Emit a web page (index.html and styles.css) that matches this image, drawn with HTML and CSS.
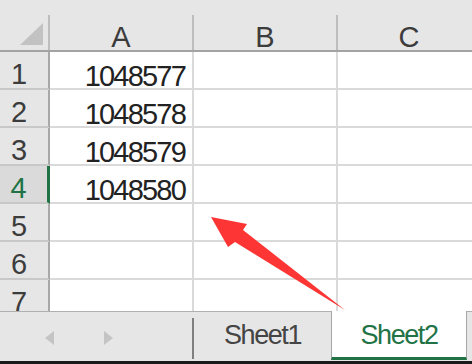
FILE: index.html
```html
<!DOCTYPE html>
<html lang="en">
<head>
  <meta charset="UTF-8">
  <title>Sheet2</title>
  <link rel="stylesheet" href="styles.css">
</head>
<body>
  <div class="sheet">
    <div class="grid">
      <div class="col-heads">
        <div class="corner"><span class="select-all"></span></div>
        <div class="col-head">A</div>
        <div class="col-head">B</div>
        <div class="col-head">C</div>
      </div>
      <div class="row">
        <div class="row-head">1</div>
        <div class="cell">1048577</div>
        <div class="cell"></div>
        <div class="cell"></div>
      </div>
      <div class="row">
        <div class="row-head">2</div>
        <div class="cell">1048578</div>
        <div class="cell"></div>
        <div class="cell"></div>
      </div>
      <div class="row">
        <div class="row-head">3</div>
        <div class="cell">1048579</div>
        <div class="cell"></div>
        <div class="cell"></div>
      </div>
      <div class="row">
        <div class="row-head selected">4</div>
        <div class="cell">1048580</div>
        <div class="cell"></div>
        <div class="cell"></div>
      </div>
      <div class="row">
        <div class="row-head">5</div>
        <div class="cell"></div>
        <div class="cell"></div>
        <div class="cell"></div>
      </div>
      <div class="row">
        <div class="row-head">6</div>
        <div class="cell"></div>
        <div class="cell"></div>
        <div class="cell"></div>
      </div>
      <div class="row">
        <div class="row-head">7</div>
        <div class="cell"></div>
        <div class="cell"></div>
        <div class="cell"></div>
      </div>
    </div>

    <div class="tabs">
      <div class="tab-nav">
        <span class="nav-prev"></span>
        <span class="nav-next"></span>
      </div>
      <div class="tab-split"></div>
      <div class="tab">Sheet1</div>
      <div class="tab active">Sheet2</div>
    </div>

    <!-- red pointer drawn over the grid -->
    <svg class="arrow" width="472" height="364" viewBox="0 0 472 364">
      <polygon points="211,217 247,224 243,230 345,310 235,242 228,247" fill="#fd3535"/>
    </svg>
  </div>
</body>
</html>
```

FILE: styles.css
```css
* {
  box-sizing: border-box;
}
body {
  margin: 0;
  font-family: "Liberation Sans", Arial, sans-serif;
  background-color: #fff;
}
.sheet {
  position: relative;
  width: 472px;
  height: 364px;
  overflow: hidden;
}
.grid {
  height: 311px;
  overflow: hidden;
}
.col-heads {
  display: flex;
  height: 52px;
  padding-top: 15px;
  background-color: #e6e6e6;
  border-bottom: 2px solid #a3a3a3;
}
.corner {
  flex: none;
  width: 50px;
  display: flex;
  justify-content: flex-end;
  align-items: flex-end;
  padding: 0 5px 5px 0;
  border-right: 2px solid #bdbdbd;
}
.select-all {
  width: 0;
  height: 0;
  border-left: 23px solid transparent;
  border-bottom: 22px solid #c2c2c2;
}
.col-head {
  flex: none;
  width: 144px;
  display: flex;
  justify-content: center;
  align-items: flex-end;
  padding-bottom: 1px;
  border-right: 2px solid #bdbdbd;
  font-size: 29px;
  line-height: 24px;
  color: #3c3c3c;
}
.row {
  display: flex;
  height: 38px;
}
.row-head {
  flex: none;
  width: 50px;
  display: flex;
  justify-content: center;
  align-items: flex-end;
  padding-right: 10px;
  background-color: #e6e6e6;
  border-right: 2px solid #a8a8a8;
  border-bottom: 2px solid #c8c8c8;
  font-size: 29px;
  line-height: 28px;
  color: #3c3c3c;
}
.row-head.selected {
  background-color: #dadada;
  color: #217346;
  border-right: 3px solid #217346;
}
.cell {
  flex: none;
  width: 144px;
  display: flex;
  justify-content: flex-end;
  align-items: flex-end;
  padding-right: 7px;
  border-right: 2px solid #dadada;
  border-bottom: 2px solid #dadada;
  font-size: 29px;
  line-height: 24px;
  letter-spacing: -1.8px;
  color: #222;
}
.tabs {
  display: flex;
  height: 53px;
  background-color: #e6e6e6;
  border-top: 1px solid #b0b0b0;
  border-bottom: 3px solid #1a1a1a;
}
.tab-nav {
  flex: none;
  width: 192px;
  display: flex;
  align-items: center;
  gap: 50px;
  padding: 3px 0 0 45px;
}
.nav-prev {
  border-right: 9px solid #c4c4c4;
  border-top: 7px solid transparent;
  border-bottom: 7px solid transparent;
}
.nav-next {
  border-left: 9px solid #c4c4c4;
  border-top: 7px solid transparent;
  border-bottom: 7px solid transparent;
}
.tab-split {
  flex: none;
  width: 2px;
  margin: 6px 0 2px;
  background-color: #7f7f7f;
}
.tab {
  flex: none;
  width: 137px;
  padding-top: 10px;
  text-align: center;
  font-size: 27px;
  line-height: 27px;
  letter-spacing: -1.4px;
  color: #444;
}
.tab.active {
  width: 136px;
  margin: -1px 0 1px;
  padding-top: 11px;
  background-color: #fff;
  color: #217346;
  border-left: 1px solid #a6a6a6;
  border-right: 1px solid #a6a6a6;
  border-bottom: 3px solid #217346;
}
.arrow {
  position: absolute;
  left: 0;
  top: 0;
  pointer-events: none;
}
```
